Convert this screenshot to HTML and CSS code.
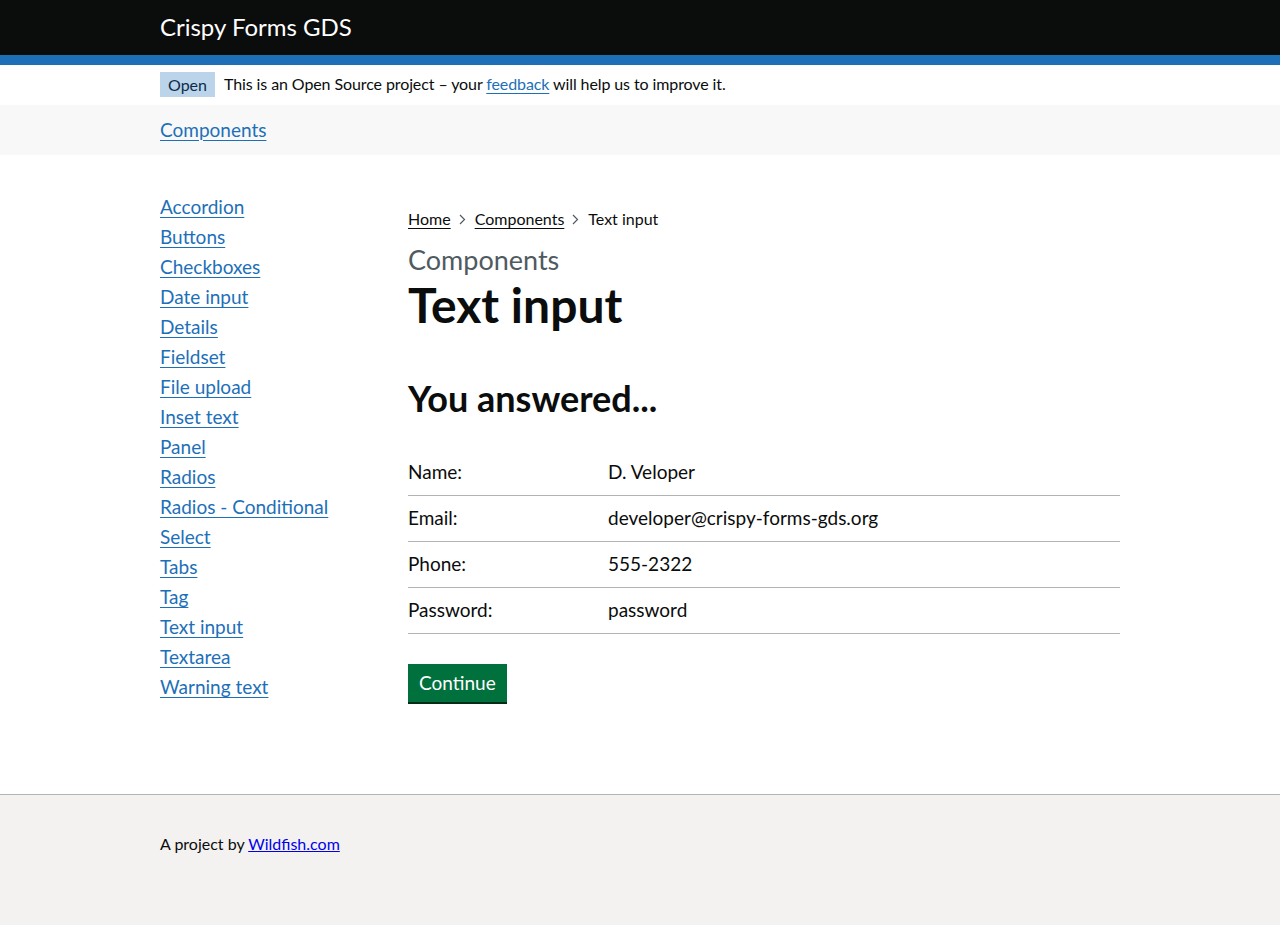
FILE: index.html
```html
<!DOCTYPE html>
<html lang="en">
<head>
<meta charset="utf-8">
<title>Text input - Crispy Forms GDS</title>
<link rel="stylesheet" href="styles.css">
</head>
<body>
<header class="header">
  <div class="container header-inner">
    <a class="header-title" href="#">Crispy Forms GDS</a>
  </div>
</header>
<div class="container phase-banner">
  <strong class="tag">Open</strong>
  <span class="phase-text">This is an Open Source project – your <a class="link" href="#">feedback</a> will help us to improve it.</span>
</div>
<nav class="subnav">
  <div class="container">
    <a class="link subnav-link" href="#">Components</a>
  </div>
</nav>
<div class="container main">
  <aside class="sidebar">
    <ul class="side-list">
      <li><a class="link" href="#">Accordion</a></li>
      <li><a class="link" href="#">Buttons</a></li>
      <li><a class="link" href="#">Checkboxes</a></li>
      <li><a class="link" href="#">Date input</a></li>
      <li><a class="link" href="#">Details</a></li>
      <li><a class="link" href="#">Fieldset</a></li>
      <li><a class="link" href="#">File upload</a></li>
      <li><a class="link" href="#">Inset text</a></li>
      <li><a class="link" href="#">Panel</a></li>
      <li><a class="link" href="#">Radios</a></li>
      <li><a class="link" href="#">Radios - Conditional</a></li>
      <li><a class="link" href="#">Select</a></li>
      <li><a class="link" href="#">Tabs</a></li>
      <li><a class="link" href="#">Tag</a></li>
      <li><a class="link" href="#">Text input</a></li>
      <li><a class="link" href="#">Textarea</a></li>
      <li><a class="link" href="#">Warning text</a></li>
    </ul>
  </aside>
  <main class="content">
    <ol class="breadcrumbs">
      <li><a class="crumb-link" href="#">Home</a></li>
      <li class="chev"><svg width="7" height="11" viewBox="0 0 7 11"><path d="M1 1 L5.5 5.5 L1 10" fill="none" stroke="#505a5f" stroke-width="1.2"/></svg></li>
      <li><a class="crumb-link" href="#">Components</a></li>
      <li class="chev"><svg width="7" height="11" viewBox="0 0 7 11"><path d="M1 1 L5.5 5.5 L1 10" fill="none" stroke="#505a5f" stroke-width="1.2"/></svg></li>
      <li>Text input</li>
    </ol>
    <span class="caption">Components</span>
    <h1 class="h1">Text input</h1>
    <h2 class="h2">You answered...</h2>
    <dl class="summary">
      <div class="row"><dt>Name:</dt><dd>D. Veloper</dd></div>
      <div class="row"><dt>Email:</dt><dd>developer@crispy-forms-gds.org</dd></div>
      <div class="row"><dt>Phone:</dt><dd>555-2322</dd></div>
      <div class="row"><dt>Password:</dt><dd>password</dd></div>
    </dl>
    <button class="button" type="button">Continue</button>
  </main>
</div>
<footer class="footer">
  <div class="container footer-inner">
    A project by <a class="footer-link" href="#">Wildfish.com</a>
  </div>
</footer>
</body>
</html>
```
FILE: styles.css
```css
* { box-sizing: border-box; }
html, body { margin: 0; padding: 0; }
body {
  font-family: Lato, "Noto Sans", Arial, sans-serif;
  color: #0b0c0c;
  background: #ffffff;
}
.container { width: 960px; margin: 0 auto; }

.header {
  background: #0b0c0c;
  border-bottom: 10px solid #1d70b8;
}
.header-inner { height: 55px; display: flex; align-items: center; }
.header-title {
  color: #ffffff;
  text-decoration: none;
  font-size: 24px;
  line-height: 30px;
  margin-top: -2px;
}

.phase-banner {
  height: 40px;
  display: flex;
  align-items: center;
  gap: 9px;
  font-size: 16px;
}
.tag {
  background: #bbd4ea;
  color: #0c2d4a;
  font-weight: 400;
  font-size: 16px;
  line-height: 25px;
  padding: 0 8px;
  margin-top: -1px;
}
.phase-text { line-height: 20px; margin-top: -2px; letter-spacing: -0.1px; }

.link { color: #1d70b8; text-decoration: underline; text-underline-offset: 3px; text-decoration-thickness: 1px; }

.subnav { background: #f8f8f8; height: 50px; }
.subnav .container { height: 50px; display: flex; align-items: center; }
.subnav-link { font-size: 19px; line-height: 25px; margin-top: -2px; }

.main {
  display: grid;
  grid-template-columns: 248px 1fr;
  padding-top: 37px;
  padding-bottom: 92px;
}
.side-list { list-style: none; margin: 0; padding: 0; font-size: 19px; line-height: 30px; }

.breadcrumbs {
  list-style: none;
  margin: 0;
  padding: 17px 0 0;
  display: flex;
  align-items: center;
  font-size: 16px;
  line-height: 20px;
}
.crumb-link { color: #0b0c0c; text-decoration: underline; text-underline-offset: 3px; }
.chev { display: flex; align-items: center; padding: 0 9px 0 8px; }

.caption {
  display: block;
  margin-top: 16px;
  font-size: 27px;
  line-height: 30px;
  color: #505a5f;
}
.h1 {
  margin: 5px 0 48px;
  font-size: 48px;
  line-height: 50px;
  font-weight: 700;
}
.h2 {
  margin: 0 0 32px;
  font-size: 36px;
  line-height: 40px;
  font-weight: 700;
}

.summary { margin: 0 0 30px; width: 712px; font-size: 19px; }
.row {
  display: grid;
  grid-template-columns: 200px 1fr;
  border-bottom: 1px solid #b1b4b6;
}
.row dt, .row dd { margin: 0; padding: 9px 0 11px; line-height: 25px; }

.button {
  font-family: inherit;
  font-size: 19px;
  line-height: 25px;
  background: #00703c;
  color: #ffffff;
  border: 0;
  padding: 6px 11px 7px;
  box-shadow: 0 2px 0 #002d18;
  border-radius: 0;
  cursor: pointer;
}

.footer {
  background: #f3f2f1;
  border-top: 1px solid #b1b4b6;
  height: 131px;
}
.footer-inner { padding-top: 39px; font-size: 16px; line-height: 20px; }
.footer-link { color: #0000ee; }
```
